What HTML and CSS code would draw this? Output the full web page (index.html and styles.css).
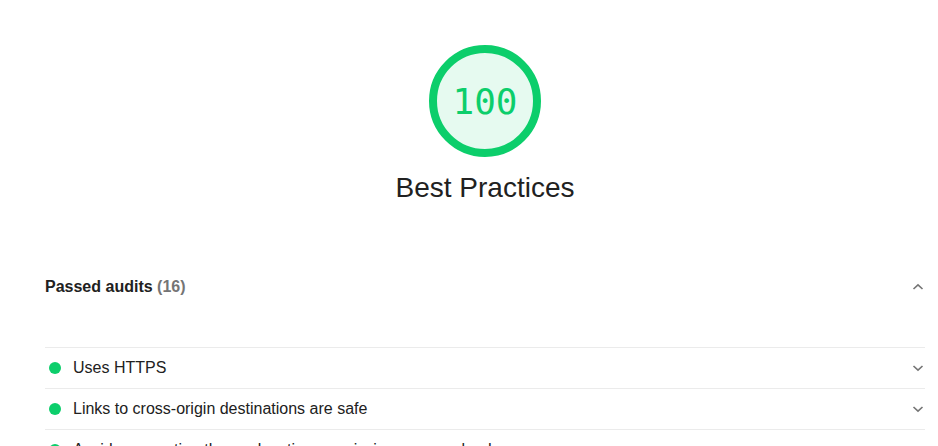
FILE: index.html
```html
<!DOCTYPE html>
<html>
<head>
<meta charset="utf-8">
<link rel="stylesheet" href="styles.css">
</head>
<body>
<div class="page">
  <div class="score">
    <div class="gauge">
      <svg width="112" height="112" viewBox="0 0 112 112">
        <circle cx="56" cy="56" r="52" fill="rgba(12,206,107,0.1)" stroke="#0cce6b" stroke-width="8"/>
      </svg>
      <span class="gauge-value">100</span>
    </div>
    <div class="title">Best Practices</div>
  </div>

  <div class="group-header">
    <span class="group-title">Passed audits <span class="count">(16)</span></span>
    <svg class="chev" width="12" height="8" viewBox="0 0 12 8"><polyline points="1.5,6 6,1.8 10.5,6" fill="none" stroke="#757575" stroke-width="1.6"/></svg>
  </div>

  <div class="audits">
    <div class="audit">
      <span class="dot"></span>
      <span class="audit-title">Uses HTTPS</span>
      <svg class="chev" width="12" height="8" viewBox="0 0 12 8"><polyline points="1.5,2 6,6.2 10.5,2" fill="none" stroke="#757575" stroke-width="1.6"/></svg>
    </div>
    <div class="audit">
      <span class="dot"></span>
      <span class="audit-title">Links to cross-origin destinations are safe</span>
      <svg class="chev" width="12" height="8" viewBox="0 0 12 8"><polyline points="1.5,2 6,6.2 10.5,2" fill="none" stroke="#757575" stroke-width="1.6"/></svg>
    </div>
    <div class="audit">
      <span class="dot"></span>
      <span class="audit-title">Avoids requesting the geolocation permission on page load</span>
      <svg class="chev" width="12" height="8" viewBox="0 0 12 8"><polyline points="1.5,2 6,6.2 10.5,2" fill="none" stroke="#757575" stroke-width="1.6"/></svg>
    </div>
  </div>
</div>
</body>
</html>
```

FILE: styles.css
```css
html, body {
  margin: 0;
  padding: 0;
  background: #ffffff;
}
body {
  font-family: "Liberation Sans", Arial, sans-serif;
  color: #212121;
  overflow: hidden;
  height: 446px;
}
.page {
  padding: 45px 13px 0 45px;
}
.score {
  display: flex;
  flex-direction: column;
  align-items: center;
}
.gauge {
  position: relative;
  width: 112px;
  height: 112px;
}
.gauge svg {
  display: block;
}
.gauge-value {
  position: absolute;
  inset: 0;
  display: flex;
  align-items: center;
  justify-content: center;
  font-family: "DejaVu Sans Mono", monospace;
  font-size: 36px;
  color: #0cce6b;
  padding-top: 1px;
}
.title {
  margin-top: 15px;
  font-size: 28px;
  line-height: 32px;
}
.group-header {
  margin-top: 73px;
  display: flex;
  align-items: center;
  justify-content: space-between;
  height: 20px;
}
.group-title {
  font-size: 16px;
  font-weight: bold;
  line-height: 20px;
}
.count {
  color: #757575;
}
.chev {
  display: block;
  margin-right: 1px;
}
.audits {
  margin-top: 50px;
}
.audit {
  display: flex;
  align-items: center;
  border-top: 1px solid #ebebeb;
  padding: 10px 0;
}
.dot {
  width: 12px;
  height: 12px;
  border-radius: 50%;
  background: #0cce6b;
  margin-left: 4px;
  margin-right: 12px;
  flex: none;
}
.audit-title {
  flex: 1;
  font-size: 16px;
  line-height: 20px;
}
```
